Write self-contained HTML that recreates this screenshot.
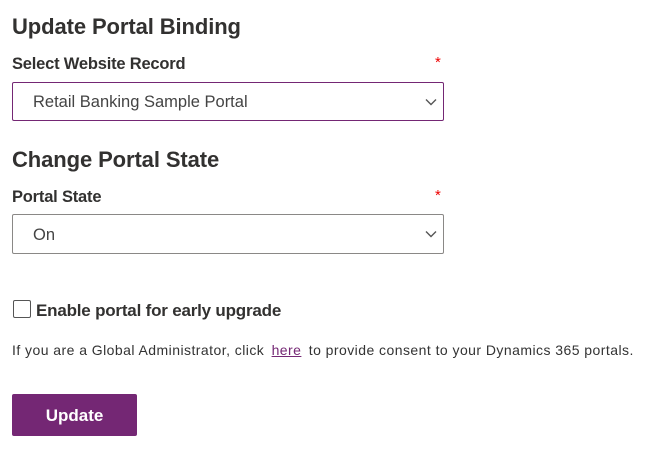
<!DOCTYPE html>
<html><head><style>
body{margin:0;background:#fff;font-family:"Liberation Sans",sans-serif;color:#323130;width:655px;height:461px;position:relative;overflow:hidden}
.a{position:absolute;white-space:nowrap}
h2{margin:0;font-size:22px;font-weight:bold;letter-spacing:-0.1px}
.lbl{font-size:16.5px;font-weight:bold;letter-spacing:-0.2px}
.star{color:#e00;font-size:15px}
.sel{position:absolute;left:12px;width:430px;border:1px solid #8a8886;border-radius:2px;background:#fff;font-size:16.5px;color:#444}
.sel span{position:absolute;left:20px;top:10px}
.sel svg{position:absolute;right:6px;top:15px}
</style></head><body>
<div class="a" style="left:12px;top:14px"><h2>Update Portal Binding</h2></div>
<div class="a lbl" style="left:12px;top:55px">Select Website Record</div>
<div class="a star" style="left:435px;top:54px">*</div>
<div class="sel" style="top:82px;height:37px;border-color:#742774"><span>Retail Banking Sample Portal</span><svg width="12" height="8"><path d="M1 1.5L6 6.5L11 1.5" fill="none" stroke="#555" stroke-width="1.4"/></svg></div>
<div class="a" style="left:12px;top:147px"><h2>Change Portal State</h2></div>
<div class="a lbl" style="left:12px;top:188px">Portal State</div>
<div class="a star" style="left:435px;top:187px">*</div>
<div class="sel" style="top:214px;height:38px"><span style="top:11px">On</span><svg width="12" height="8"><path d="M1 1.5L6 6.5L11 1.5" fill="none" stroke="#555" stroke-width="1.4"/></svg></div>
<div class="a" style="left:13px;top:300px;width:16px;height:16px;border:1px solid #555;border-radius:2px"></div>
<div class="a lbl" style="left:36px;top:301px;font-size:17px">Enable portal for early upgrade</div>
<div class="a" style="left:12px;top:342px;font-size:14px;color:#333;letter-spacing:0.45px">If you are a Global Administrator, click <span style="color:#742774;text-decoration:underline;margin:0 3px">here</span> to provide consent to your Dynamics 365 portals.</div>
<div class="a" style="left:12px;top:394px;width:125px;height:42px;background:#742774;border-radius:2px;color:#fff;font-weight:bold;font-size:17px;line-height:44px;text-align:center">Update</div>
</body></html>
